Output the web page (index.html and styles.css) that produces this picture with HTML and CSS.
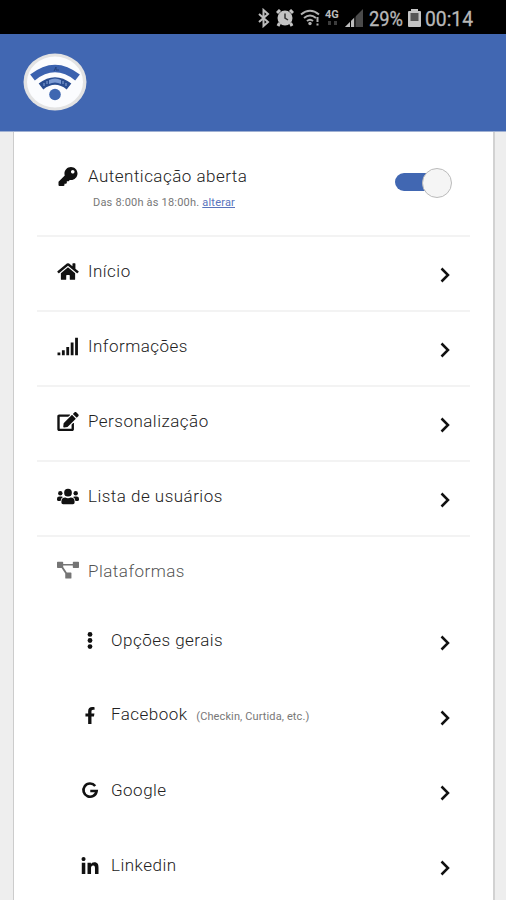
FILE: index.html
```
<!DOCTYPE html>
<html lang="pt-BR">
<head>
    <meta charset="UTF-8">
    <meta name="viewport" content="width=device-width, initial-scale=1.0">
    <title>Wi-Fi - Menu</title>
    <link rel="stylesheet" href="styles.css">
</head>
<body>

    <div class="status-bar">
        <svg class="bluetooth" width="14" height="20" viewBox="0 0 14 20"><path d="M2 6l9 8-4.500 4V2L11 6l-9 8" fill="none" stroke="#bdbdbd" stroke-width="2"/></svg>
        <svg class="alarm" width="18" height="18" viewBox="0 0 18 18">
            <circle cx="9" cy="9" r="7.500" fill="#c4c4c4"/>
            <path d="M1 4l3-3M14 1l3 3M3.500 14l-1.500 3M14.500 14l1.500 3" stroke="#c4c4c4" stroke-width="3"/>
            <path d="M9 4.500V9l3 2" fill="none" stroke="#333" stroke-width="1.500"/>
        </svg>
        <svg class="wifi" width="20" height="17" viewBox="0 0 20 17">
            <g fill="none" stroke="#b0b0b0" stroke-width="2">
                <path d="M1 5.500Q10-2 19 5.500M4 9q6-5 12 0M7 12q3-2.500 6 0"/>
                <path d="M17.500 8v5M17.500 14.500v2"/>
            </g>
            <circle cx="10" cy="14.500" r="1.700" fill="#b0b0b0"/>
        </svg>
        <div class="network">
            <span>4G</span>
            <svg width="12" height="5" viewBox="0 0 12 5"><path d="M1 0h3v4H1zM7 0h3v4H7z" fill="#3c3c3c"/></svg>
        </div>
        <svg class="signal" width="18" height="18" viewBox="0 0 18 18">
            <path d="M0 18L18 0v18z" fill="#4a4a4a"/>
            <path d="M0 18l9-9v9z" fill="#bdbdbd"/>
            <path d="M5.500 10v8M10 6v12" stroke="#000"/>
        </svg>
        <svg class="percent" width="38" height="28"><text x="1" y="22" textLength="34" lengthAdjust="spacingAndGlyphs">29%</text></svg>
        <svg class="battery" width="13" height="18" viewBox="0 0 13 18">
            <path d="M3 0h7v2h2q1 0 1 1v14q0 1-1 1H1q-1 0-1-1V3q0-1 1-1h2z" fill="#c4c4c4"/>
            <path d="M2.500 4h8v8h-8z" fill="#555"/>
        </svg>
        <svg class="clock" width="50" height="28"><text x="0" y="22" textLength="48" lengthAdjust="spacingAndGlyphs">00:14</text></svg>
    </div>

    <div class="header">
        <svg width="66" height="60" viewBox="0 0 66 60">
            <ellipse cx="32" cy="29" rx="31.500" ry="28.500" fill="#e3e3e3"/>
            <ellipse cx="32" cy="29" rx="28" ry="25.500" fill="#fbfcfe"/>
            <path d="M9.500 24.500Q32 6.500 54.500 24.500" fill="none" stroke="#3b62af" stroke-width="7.500"/>
            <path d="M18 33.500Q32 22.500 46 33.500" fill="none" stroke="#294d91" stroke-width="7.500"/>
            <path d="M26 27q6-3 12 0v4q-6-3-12 0z" fill="#7b9bd4"/>
            <path d="M31 18l2-4v3h3" fill="none" stroke="#24437c"/>
            <path d="M21 30v3M24 28v3M40 28v3M43 30v3" stroke="#8da9da"/>
            <circle cx="32" cy="41.500" r="5.800" fill="#3f67b1"/>
        </svg>
    </div>

    <div class="card">
        <div class="row auth">
            <svg class="icon key" viewBox="0 0 512 512"><path d="M512 176.001C512 273.203 433.202 352 336 352c-11.220 0-22.190-1.062-32.827-3.069l-24.012 27.014A23.999 23.999 0 0 1 261.223 384H224v40c0 13.255-10.745 24-24 24h-40v40c0 13.255-10.745 24-24 24H24c-13.255 0-24-10.745-24-24v-78.059c0-6.365 2.529-12.470 7.029-16.971l161.802-161.802C163.108 213.814 160 195.271 160 176 160 78.798 238.797.001 335.999 0 433.488-.001 512 78.511 512 176.001zM336 128c0 26.510 21.490 48 48 48s48-21.490 48-48-21.490-48-48-48-48 21.490-48 48z"/></svg>
            <div class="label">
                Autenticação aberta
                <p class="hours">Das 8:00h às 18:00h. <a href="#">alterar</a></p>
            </div>
            <div class="switch"></div>
        </div>

        <div class="row">
            <svg class="icon" viewBox="0 0 576 512"><path d="M280.370 148.260L96 300.110V464a16 16 0 0 0 16 16l112.060-.290a16 16 0 0 0 15.920-16V368a16 16 0 0 1 16-16h64a16 16 0 0 1 16 16v95.640a16 16 0 0 0 16 16.050L464 480a16 16 0 0 0 16-16V300L295.670 148.260a12.190 12.190 0 0 0-15.300 0zM571.600 251.470L488 182.560V44.050a12 12 0 0 0-12-12h-56a12 12 0 0 0-12 12v72.610L318.470 43a48 48 0 0 0-61 0L4.340 251.470a12 12 0 0 0-1.600 16.900l25.500 31A12 12 0 0 0 45.150 301l235.220-193.740a12.190 12.190 0 0 1 15.300 0L530.900 301a12 12 0 0 0 16.900-1.600l25.500-31a12 12 0 0 0-1.700-16.930z"/></svg>
            <div class="label">Início</div>
            <svg class="arrow" viewBox="0 0 10 16"><path d="M1.500 1.500L8 8l-6.500 6.500"/></svg>
        </div>

        <div class="row">
            <svg class="icon" viewBox="0 0 640 512"><path d="M15 427h82v85H15zM143 363h82v149h-82zM271 267h82v245h-82zM399 139h82v373h-82zM527 0h82v512h-82z"/></svg>
            <div class="label">Informações</div>
            <svg class="arrow" viewBox="0 0 10 16"><path d="M1.500 1.500L8 8l-6.500 6.500"/></svg>
        </div>

        <div class="row">
            <svg class="icon" viewBox="0 0 576 512"><path d="M402.600 83.200l90.200 90.200c3.800 3.800 3.800 10 0 13.800L274.400 405.600l-92.800 10.300c-12.400 1.400-22.900-9.100-21.500-21.500l10.300-92.800L388.800 83.200c3.800-3.800 10-3.800 13.800 0zm162-22.900l-48.800-48.800c-15.200-15.200-39.900-15.200-55.200 0l-35.400 35.400c-3.800 3.800-3.800 10 0 13.800l90.200 90.200c3.800 3.800 10 3.800 13.800 0l35.400-35.400c15.200-15.300 15.200-40 0-55.200zM384 346.200V448H64V128h229.800c3.200 0 6.200-1.300 8.500-3.500l40-40c7.600-7.600 2.200-20.500-8.500-20.500H48C21.500 64 0 85.500 0 112v352c0 26.500 21.500 48 48 48h352c26.500 0 48-21.500 48-48V306.200c0-10.700-12.900-16-20.500-8.500l-40 40c-2.200 2.300-3.500 5.300-3.500 8.500z"/></svg>
            <div class="label">Personalização</div>
            <svg class="arrow" viewBox="0 0 10 16"><path d="M1.500 1.500L8 8l-6.500 6.500"/></svg>
        </div>

        <div class="row">
            <svg class="icon" viewBox="0 0 640 512">
                <circle cx="96" cy="160" r="64"/>
                <circle cx="544" cy="160" r="64"/>
                <circle cx="320" cy="144" r="112"/>
                <path d="M64 256h64q27 0 45 18-60 33-70 110H32q-32 0-32-32v-32q0-64 64-64zM576 256h-64q-27 0-45 18 60 33 70 110h71q32 0 32-32v-32q0-64-64-64zM243 288q77 36 154 0 115 0 115 115v29q0 48-48 48H176q-48 0-48-48v-29q0-115 115-115z"/>
            </svg>
            <div class="label">Lista de usuários</div>
            <svg class="arrow" viewBox="0 0 10 16"><path d="M1.500 1.500L8 8l-6.500 6.500"/></svg>
        </div>

        <div class="row section">
            <svg class="icon" viewBox="0 0 640 512"><path d="M20 0h140q20 0 20 20v44h280V20q0-20 20-20h140q20 0 20 20v140q0 20-20 20H480q-20 0-20-20v-50H180v44l105 158h115q20 0 20 20v140q0 20-20 20H260q-20 0-20-20V340L134 180H20q-20 0-20-20V20Q0 0 20 0z"/></svg>
            <div class="label">Plataformas</div>
        </div>

        <div class="row sub">
            <svg class="icon" viewBox="0 0 192 512"><circle cx="96" cy="72" r="72"/><circle cx="96" cy="256" r="72"/><circle cx="96" cy="440" r="72"/></svg>
            <div class="label">Opções gerais</div>
            <svg class="arrow" viewBox="0 0 10 16"><path d="M1.500 1.500L8 8l-6.500 6.500"/></svg>
        </div>

        <div class="row sub">
            <svg class="icon" viewBox="0 0 320 512"><path d="M279.140 288l14.220-92.660h-88.910v-60.130c0-25.350 12.420-50.060 52.240-50.060h40.420V6.260S260.430 0 225.360 0c-73.220 0-121.080 44.380-121.080 124.720v70.620H22.890V288h81.390v224h100.170V288z"/></svg>
            <div class="label">Facebook <small>(Checkin, Curtida, etc.)</small></div>
            <svg class="arrow" viewBox="0 0 10 16"><path d="M1.500 1.500L8 8l-6.500 6.500"/></svg>
        </div>

        <div class="row sub">
            <svg class="icon" viewBox="0 0 18 18"><path d="M14.500 4.200A7 7 0 1 0 16 9.500H9.300" fill="none" stroke="#111" stroke-width="2.800"/></svg>
            <div class="label">Google</div>
            <svg class="arrow" viewBox="0 0 10 16"><path d="M1.500 1.500L8 8l-6.500 6.500"/></svg>
        </div>

        <div class="row sub">
            <svg class="icon" viewBox="0 0 448 448"><path d="M100.280 448H7.400V148.900h92.880zM53.790 108.100C24.090 108.100 0 83.500 0 53.800a53.790 53.790 0 0 1 107.580 0c0 29.700-24.100 54.300-53.790 54.300zM447.900 448h-92.680V302.400c0-34.700-.700-79.200-48.290-79.200-48.290 0-55.690 37.700-55.690 76.700V448h-92.780V148.900h89.080v40.800h1.300c12.400-23.500 42.690-48.300 87.880-48.300 94 0 111.280 61.900 111.280 142.300V448z"/></svg>
            <div class="label">Linkedin</div>
            <svg class="arrow" viewBox="0 0 10 16"><path d="M1.500 1.500L8 8l-6.500 6.500"/></svg>
        </div>
    </div>

</body>
</html>
```
FILE: styles.css
```
* {
    box-sizing: border-box;
    margin: 0;
    padding: 0;
}
body {
    height: 900px;
    overflow: hidden;
    display: flex;
    flex-direction: column;
    background: #eee;
    font-family: Roboto, sans-serif;
}
svg {
    display: block;
    flex-shrink: 0;
}
.status-bar {
    height: 34px;
    flex-shrink: 0;
    background: #000;
    display: flex;
    align-items: center;
    padding: 1px 0 0 257px;
}
.status-bar text {
    font-size: 20px;
    fill: #b8b8b8;
    stroke: #b8b8b8;
    stroke-width: 0.3px;
}
.alarm {
    margin-left: 5px;
}
.wifi {
    margin-left: 6px;
}
.network {
    width: 15px;
    height: 18px;
    margin-left: 5px;
    font-size: 11px;
    line-height: 12px;
    font-weight: bold;
    color: #bbb;
}
.network svg {
    margin-left: 2px;
}
.signal {
    margin-left: 5px;
}
.percent {
    margin-left: 5px;
}
.battery {
    margin-left: 2px;
}
.clock {
    margin-left: 4px;
}
.header {
    height: 98px;
    flex-shrink: 0;
    padding: 19px 23px;
    background: #4167b2;
    border-bottom: 1px solid #9fb0d2;
}
.card {
    width: 482px;
    height: 768px;
    flex-shrink: 0;
    margin-left: 13px;
    padding: 30px 23px 0;
    background: #fff;
    border-left: 1px solid #ccc;
    border-right: 2px solid #d2d2d2;
}
.row {
    height: 75px;
    width: 433px;
    display: flex;
    align-items: center;
    padding: 0 20px 5px;
    border-bottom: 2px solid #f3f3f3;
}
.icon {
    width: 22px;
    height: 19px;
    margin-right: 9px;
    fill: #111;
}
.label {
    flex: 1;
    font-size: 17px;
    font-weight: 300;
    line-height: 22px;
    letter-spacing: 0.48px;
    color: #222;
}
.arrow {
    width: 10px;
    height: 16px;
    margin-top: 8px;
    fill: none;
    stroke: #111;
    stroke-width: 2.5;
}
.auth {
    align-items: flex-start;
}
.auth .icon {
    margin-top: 5px;
}
.auth .label {
    margin-top: 3px;
}
.hours {
    margin: 6px 0 0 5px;
    font-size: 11px;
    font-weight: 400;
    line-height: 20px;
    letter-spacing: 0.2px;
    color: #777;
}
.hours a {
    color: #5974bd;
}
.switch {
    position: relative;
    width: 57px;
    height: 18px;
    margin: 11px -2px 0 0;
    border-radius: 9px;
    background: linear-gradient(to right, #4167b2 40px, transparent 40px);
}
.switch::after {
    content: "";
    position: absolute;
    right: 0;
    top: -5px;
    width: 28px;
    height: 28px;
    border: 1px solid #bbb;
    border-radius: 50%;
    background: #f5f5f5;
}
.section {
    height: 67px;
    padding-bottom: 0;
    border-bottom: none;
}
.section .icon {
    fill: #757575;
}
.section .label {
    color: #555;
}
.sub {
    border-bottom: none;
    padding: 0 20px 3px 44px;
}
.sub .icon {
    width: 18px;
    height: 17px;
    margin-right: 12px;
}
.sub .arrow {
    margin-top: 6px;
}
small {
    margin-left: 4px;
    font-size: 11px;
    font-weight: 400;
    letter-spacing: 0.12px;
    color: #777;
}
```
